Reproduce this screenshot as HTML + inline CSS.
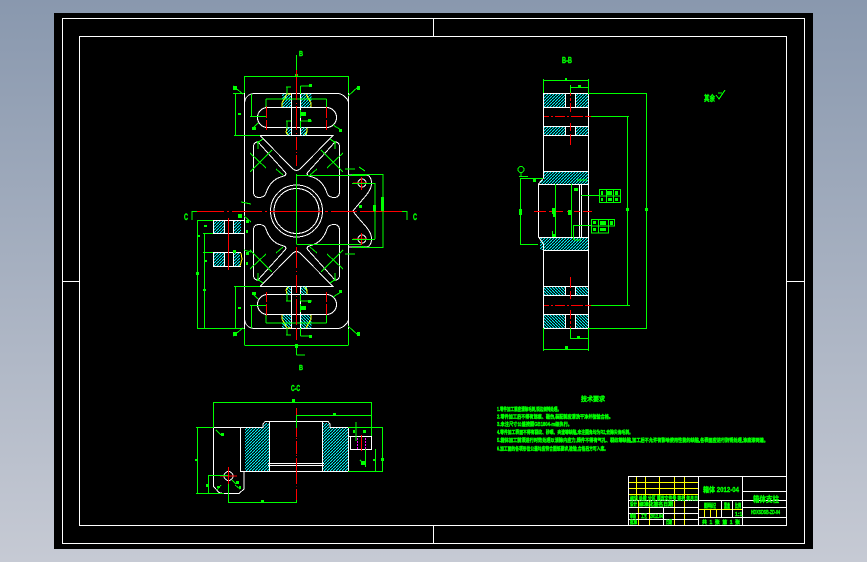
<!DOCTYPE html>
<html><head><meta charset="utf-8"><style>
html,body{margin:0;padding:0;width:867px;height:562px;overflow:hidden;background:linear-gradient(#8998ae,#c6cad4)}
svg{position:absolute;left:0;top:0;shape-rendering:crispEdges}
text{font-family:"Liberation Sans","Noto Sans CJK SC",sans-serif;fill:#0f0;font-weight:bold;stroke:#0f0;stroke-width:.4}
.w{stroke:#fff;fill:none}.g{stroke:#0f0;fill:none}.r{stroke:#f00;fill:none}.y{stroke:#ff0;fill:none}
</style></head><body>
<svg width="867" height="562" viewBox="0 0 867 562">
<defs>
<pattern id="h" width="3" height="3" patternUnits="userSpaceOnUse"><path d="M0 3L3 0" stroke="#00f0f0" stroke-width="1" fill="none"/></pattern>
<g id="win"><path class="w" d="M258 142C255 142 253.500 144 253.500 147V192C253.500 196 256 197.500 259 197.500C263 197.500 265 196 266 193C268 187 272 181 278 178L285 175.500C286.500 174 286 173 285 172L258 142"/>
<path class="g" d="M258 149V141M257 143L263 139M250 153L266 168M272 150L250 172M276 169L283 175"/></g>
<g id="topHalf">
<path class="w" d="M244.500 103C245 98 248 94 254 93.500H338C343 94 347 98 348.500 102"/>
<rect class="w" x="257.500" y="107.500" width="79" height="20" rx="10"/>
<path class="w" d="M260 135.500H333L300 169Q296.500 172 293 169L260 135.500"/>
<rect x="282" y="94" width="9.500" height="13" fill="url(#h)"/><rect x="300.500" y="94" width="11" height="13" fill="url(#h)"/>
<rect x="286" y="127.500" width="5.500" height="8" fill="url(#h)"/><rect x="300.500" y="127.500" width="6.500" height="8" fill="url(#h)"/>
<path class="y" d="M287 94L282 103V107M291 94H287M306 94L311 103V107M287 128L286 132L288 135M307 128V132L305 135"/>
<path class="w" d="M291.500 93.500V135.500M300.500 93.500V135.500"/>
<path class="r" d="M266.500 106V118M266.500 120V130M326.500 106V118M326.500 120V130"/>
<path class="g" d="M266 99H326.500M266 99V107M326.500 99V107M235.500 93.500V135.500M233 93.500H244M234 135.500H260M251.500 94V116M250 116.500H266M287 87V94M286 87H291M300.500 86V94M300.500 86H312M287 121V128M286 121H291M300.500 121V128M300.500 121H312M233 86L243 94M348 96L358 87M253 128L258 123M333 125L341 130M300.500 110V118"/>
<path fill="#0f0" d="M233 86h4v4h-4zM357 86h3v4h-3zM252 127h4v3h-4zM339 129h3v3h-3zM309 84h3v3h-3zM308 119h3v3h-3zM301 112h5v4h-5zM295 74h3v3h-3zM238 113h3v2h-3z"/>
</g>
<g id="hatchSec"><rect x="544" y="94" width="21" height="13" fill="url(#h)"/><rect x="576" y="94" width="12" height="13" fill="url(#h)"/><rect x="544" y="127" width="21" height="8.500" fill="url(#h)"/><rect x="576" y="127" width="12" height="8.500" fill="url(#h)"/>
<path class="w" d="M543.500 93.500H588M543.500 107.500H588M543.500 126.500H588M543.500 135.500H588M565.500 93.500V107.500M575.500 93.500V107.500M565.500 126.500V135.500M575.500 126.500V135.500"/>
<path class="r" d="M570.500 89V96M570.500 98V101M570.500 103V112M570.500 123V131M570.500 134V145"/></g>
</defs>
<rect x="54" y="13" width="759" height="536" fill="#000"/>
<g>
<rect class="w" x="62.500" y="18.500" width="742" height="525"/>
<rect class="w" x="79.500" y="36.500" width="707" height="489"/>
<path class="w" d="M433.500 18V36M433.500 526V544M62 281.500H79M787 281.500H805"/>
</g>
<!-- main view -->
<g>
<path class="w" d="M244.500 93V329M348.500 93V329"/>
<use href="#topHalf"/><use href="#topHalf" transform="matrix(1 0 0 -1 0 422)"/>
<use href="#win"/><use href="#win" transform="matrix(-1 0 0 1 593 0)"/><use href="#win" transform="matrix(1 0 0 -1 0 422)"/><use href="#win" transform="matrix(-1 0 0 -1 593 422)"/>
<circle class="w" cx="296.500" cy="211" r="26"/><circle class="w" cx="296.500" cy="211" r="22.500"/>
<path class="w" d="M349 175H366C369 175 371.500 178 371.500 183C371.500 192 363 198 353 211C361 223 371.500 229 371.500 239C371.500 244 369 247 366 247H349"/>
<circle class="w" cx="362" cy="183" r="4"/><circle class="w" cx="362" cy="239" r="4"/>
<path class="r" d="M353 183H367M361.500 177V190M353 239H367M361.500 233V245"/>
<path class="r" d="M296.500 70V100M296.500 103V104M296.500 106V130M296.500 133V134M296.500 137V150M296.500 152V153M296.500 155V166M296.500 174V180M296.500 224V240M296.500 243V244M296.500 247V268M296.500 271V272M296.500 275V293M296.500 296V297M296.500 299V325M296.500 328V340"/>
<path class="r" d="M197 211.500H224M227 211.500H229M232 211.500H262M265 211.500H267M270 211.500H322M325 211.500H328M331 211.500H357M360 211.500H402"/>
<path class="g" d="M296.500 55V70M296.500 174V244M296.500 345V355M296.500 355H305M296.500 175.500H366M296.500 244.500H361M244.500 76.500H348.500M244.500 76V93M348.500 76V93M244.500 345.500H348.500M244.500 329V345M348.500 329V345"/>
<path class="g" d="M192 220V211.500H197M407 211V220M402 211.500H407M197.500 220.500V328.500M197 220.500H213M197 328.500H244M204.500 252V328.500M203 252.500H213M204.500 233.500V252M203 233.500H213"/>
<path class="g" d="M352 174.500H383M383 174V248M352 247.500H383M352 183.500H375M375 183V239M352 239.500H375M374.500 205V212M345 169H355M345 254H355M359 167L365 171M241 202L251 204M244 216L251 222M244 250L251 252"/>
<rect x="214" y="220" width="11" height="13" fill="url(#h)"/><rect x="233" y="220" width="8" height="13" fill="url(#h)"/>
<rect x="214" y="253" width="11" height="14" fill="url(#h)"/><rect x="233" y="253" width="7" height="14" fill="url(#h)"/>
<path class="w" d="M213 220.500H244M213 233.500H244M213 252.500H241M213 266.500H241M213.500 220V233M224.500 220V233M233.500 220V233M213.500 252V267M224.500 252V267M233.500 252V267"/>
<path class="y" d="M241 253L242 259L240 266"/>
<path class="r" d="M228.500 218V270"/>
<path fill="#0f0" d="M238 214h4v4h-4zM246 220h3v3h-3zM246 230h2v3h-2zM246 252h3v3h-3zM246 262h2v3h-2zM196 272h3v3h-3zM203 289h3v2h-3zM197 235h3v2h-3zM204 225h3v2h-3zM204 260h3v2h-3zM381 197h3v14h-3zM373 205h3v6h-3zM295 344h3v3h-3zM233 250h3v3h-3zM359 205h3v3h-3zM361 246h3v2h-3z"/>
</g>
<!-- bottom view -->
<g>
<rect x="245" y="428" width="24" height="43" fill="url(#h)"/><rect x="263" y="423" width="6" height="6" fill="url(#h)"/>
<rect x="323" y="428" width="25" height="43" fill="url(#h)"/><rect x="323" y="423" width="6" height="6" fill="url(#h)"/>
<path class="w" d="M265 421.500H328L330 424V427.500H348.500V471.500H240.500V428M240.500 427.500H263V424L265 421.500M213.500 427.500H241M213.500 427V486.500L219 492.500L223 493.500H239L244 489V471M269.500 422V471M322.500 422V471M268 463.500H324M268 465.500H324M348 436.500H371.500V449.500H350.500V436"/>
<circle class="w" cx="228.500" cy="476" r="4.500"/>
<path class="r" d="M220 476H237M228.500 467V484M296.500 408V421M296.500 428V437M296.500 438V439M296.500 441V454M296.500 455V456M296.500 458V484M296.500 486V486.500M296.500 489V500M361.500 435V451"/>
<path stroke="#f0f" fill="none" stroke-dasharray="2 1" d="M357.500 438V450M365.500 438V450"/>
<path class="g" d="M213 402.500H371.500M213.500 402V428M371.500 402V436M296.500 415.500H371.500M296.500 415V428M196 427.500H213M197.500 427V493.500M196 493.500H224M208.500 475V493M208 475.500H228M228.500 484V503M228.500 502.500H296.500M296.500 500V503M348 427.500H383M382.500 427V471.500M348 471.500H383M375.500 449V471.500M365.500 449V467M356 422V441M216 430L221 435M221 485L217 490M232 480L236 484M235 485L240 489M360 460L364 464"/>
<path fill="#0f0" d="M292 399h3v3h-3zM333 413h3v3h-3zM195 459h3v2h-3zM206 484h2v3h-2zM373 459h3v2h-3zM381 458h3v3h-3zM261 500h3v3h-3zM361 461h4v4h-4zM221 433h3v3h-3zM217 486h3v2h-3zM236 481h3v3h-3zM239 486h2v3h-2zM363 430h3v3h-3zM353 430h2v3h-2z"/>
</g>
<!-- section B-B -->
<g>
<use href="#hatchSec"/><use href="#hatchSec" transform="matrix(1 0 0 -1 0 422)"/>
<rect x="544" y="172" width="44" height="12" fill="url(#h)"/><rect x="540" y="238" width="48" height="12" fill="url(#h)"/>
<rect x="540" y="180" width="5" height="4" fill="url(#h)"/>
<path class="w" d="M543.500 93V178L538.500 184V237L543.500 244V328.500M588.500 93V328.500M543.500 171.500H588M538.500 184.500H588M538.500 237.500H588M543.500 250.500H588M579.500 184V237M581.500 184V237M543.500 328.500H588"/>
<path class="r" d="M534 211.500H546M549 211.500H552M554 211.500H563M567 211.500H571M574 211.500H580M583 211.500H592M544 116.500H549M551 116.500H553M555 116.500H565M567 116.500H569M571 116.500H583M585 116.500H592M544 305.500H549M551 305.500H553M555 305.500H565M567 305.500H569M571 305.500H583M585 305.500H592"/>
<path class="g" d="M543.500 79V93M588.500 79V93M543.500 80.500H588.500M570.500 85V93M570.500 87.500H588.500M588 93.500H647M646.500 93V328.500M588 328.500H647M591 116.500H629M627.500 116V305.500M591 305.500H630M543.500 328V351M588.500 328V351M543.500 349.500H588.500M570.500 328V339M570.500 338.500H588.500M520.500 178V244M520 178.500H543M520 244.500H538M555.500 184V237M571.500 184V237M581 195.500H599M573 225.500H591M573.500 225V240M577 180H587M574 240H581M528 176.500H519"/>
<rect class="g" x="599.500" y="189.500" width="7" height="6.500"/><rect class="g" x="606.500" y="189.500" width="7" height="6.500"/><rect class="g" x="613.500" y="189.500" width="7" height="6.500"/>
<rect class="g" x="599.500" y="196" width="7" height="6.500"/><rect class="g" x="606.500" y="196" width="7" height="6.500"/><rect class="g" x="613.500" y="196" width="7" height="6.500"/>
<rect class="g" x="591.500" y="219.500" width="7" height="6.500"/><rect class="g" x="598.500" y="219.500" width="10" height="6.500"/><rect class="g" x="608.500" y="219.500" width="6" height="6.500"/>
<rect class="g" x="591.500" y="226" width="7" height="7"/><rect class="g" x="598.500" y="226" width="10" height="7"/>
<circle class="g" cx="521" cy="169.500" r="3"/><path class="g" d="M521 172V176"/>
<path fill="#0f0" d="M601 191h2v4h-2zM607 191h5v4h-5zM615 191h3v4h-3zM601 198h2v3h-2zM608 198h4v3h-4zM615 198h3v3h-3zM593 221h3v3h-3zM600 221h6v4h-6zM610 221h3v4h-3zM593 228h3v3h-3zM600 228h6v3h-6zM552 208h4v6h-4zM553 214h3v3h-3zM568 210h3v5h-3zM519 209h3v6h-3zM552 237h4v-6h-1v3h-2v-3h-1zM574 188h4v3h-4zM533 179h3v3h-3zM645 208h3v3h-3zM626 208h3v3h-3zM578 85h3v3h-3zM565 78h2v2h-2zM577 336h3v2h-3zM565 346h3v3h-3z"/>
</g>
<!-- title block -->
<g>
<path class="y" d="M629 482.500H698M629 488.500H698M629 494.500H698M636.500 477V500M645.500 477V500M659.500 477V500M674.500 477V525M684.500 477V525M638.500 500V525M649.500 500V525M698 509.500H742M704.500 509V517M710.500 509V517M716.500 509V517"/>
<path class="w" d="M628.500 476.500H787M628.500 476V525M698.500 476V525M742.500 476V525M629 500.500H787M629 507.500H698M629 513.500H698M629 519.500H698M663.500 507V525M721.500 500V517M732.500 500V517M698 517.500H787M742 491.500H787M742 507.500H787"/>
</g>
<text x="703" y="492" font-size="7" textLength="36" lengthAdjust="spacingAndGlyphs">箱体 2012-04</text>
<text x="753" y="502" font-size="8" textLength="26" lengthAdjust="spacingAndGlyphs">箱体支柱</text>
<text x="751" y="514" font-size="5.500" textLength="29" lengthAdjust="spacingAndGlyphs">HDXSDSB-ZD-04</text>
<text x="630" y="500" font-size="5" textLength="68" lengthAdjust="spacingAndGlyphs">标记 处数 分区 更改文件号 签名 年月日</text>
<text x="630" y="506" font-size="5" textLength="7" lengthAdjust="spacingAndGlyphs">设计</text>
<text x="639" y="506" font-size="5" textLength="34" lengthAdjust="spacingAndGlyphs">标准化签名日期</text>
<text x="630" y="518" font-size="5" textLength="6" lengthAdjust="spacingAndGlyphs">审核</text>
<text x="641" y="518" font-size="5" textLength="6" lengthAdjust="spacingAndGlyphs">工艺</text>
<text x="650" y="518" font-size="5" textLength="13" lengthAdjust="spacingAndGlyphs">2012.04</text>
<text x="630" y="524" font-size="5" textLength="7" lengthAdjust="spacingAndGlyphs">批准</text>
<text x="666" y="524" font-size="5" textLength="6" lengthAdjust="spacingAndGlyphs">日期</text>
<text x="704" y="508" font-size="6" textLength="12" lengthAdjust="spacingAndGlyphs">图样标记</text>
<text x="724" y="508" font-size="6" textLength="6" lengthAdjust="spacingAndGlyphs">重量</text>
<text x="735" y="508" font-size="6" textLength="6" lengthAdjust="spacingAndGlyphs">比例</text>
<text x="735" y="516" font-size="5">1:1</text>
<text x="702" y="524" font-size="5" textLength="38" lengthAdjust="spacing">共 1 张 第 1 张</text>
<!-- tech requirements -->
<text x="581" y="401" font-size="6.500" textLength="24" lengthAdjust="spacingAndGlyphs">技术要求</text>
<text x="497" y="411" font-size="5" textLength="64" lengthAdjust="spacingAndGlyphs">1.零件加工前应清除毛刺,锐边倒钝处理。</text>
<text x="497" y="418.500" font-size="5" textLength="116" lengthAdjust="spacingAndGlyphs">2.零件加工后不得有划痕、碰伤,装配前应清洗干净并检验合格。</text>
<text x="497" y="426" font-size="5" textLength="75" lengthAdjust="spacingAndGlyphs">3.未注尺寸公差按照GB1804-m级执行。</text>
<text x="497" y="434" font-size="5" textLength="136" lengthAdjust="spacingAndGlyphs">4.零件加工表面不得有裂纹、砂眼、夹渣等缺陷,未注圆角均为R2,去除尖角毛刺。</text>
<text x="497" y="442" font-size="5" textLength="271" lengthAdjust="spacingAndGlyphs">5.箱体加工前须进行时效处理以消除内应力,铸件不得有气孔、裂纹等缺陷,加工后不允许有影响使用性能的缺陷,各表面应进行防锈处理,涂底漆两遍。</text>
<text x="497" y="450.500" font-size="5" textLength="111" lengthAdjust="spacingAndGlyphs">6.加工面的各项形位公差均应符合图纸要求,检验,合格后方可入库。</text>
<!-- labels -->
<text x="562" y="63" font-size="8" textLength="10" lengthAdjust="spacingAndGlyphs">B-B</text>
<text x="291" y="391" font-size="8" textLength="9" lengthAdjust="spacingAndGlyphs">C-C</text>
<text x="299" y="56" font-size="7" textLength="4" lengthAdjust="spacingAndGlyphs">B</text>
<text x="299" y="370" font-size="7" textLength="4" lengthAdjust="spacingAndGlyphs">B</text>
<text x="184" y="220" font-size="9" textLength="4" lengthAdjust="spacingAndGlyphs">C</text>
<text x="413" y="220" font-size="9" textLength="4" lengthAdjust="spacingAndGlyphs">C</text>
<text x="704" y="101" font-size="8" textLength="11" lengthAdjust="spacingAndGlyphs">其余</text>
<path class="g" d="M716 95L719 99L725 90M718 93H722"/>
</svg>
</body></html>
